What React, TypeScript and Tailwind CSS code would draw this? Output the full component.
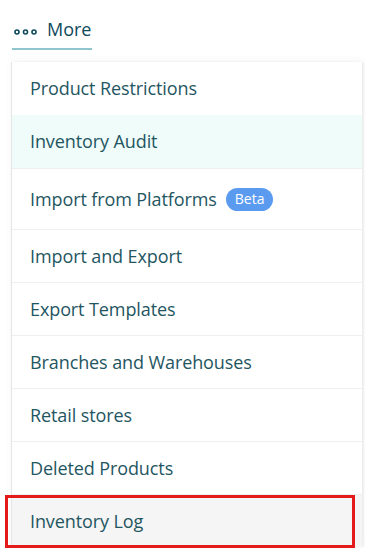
const items = [
  { label: 'Product Restrictions' },
  { label: 'Inventory Audit', active: true },
  { label: 'Import from Platforms', badge: 'Beta' },
  { label: 'Import and Export' },
  { label: 'Export Templates' },
  { label: 'Branches and Warehouses' },
  { label: 'Retail stores' },
  { label: 'Deleted Products' },
  { label: 'Inventory Log', hover: true },
]

function Dots() {
  return (
    <svg width="23" height="6" viewBox="0 0 23 6" fill="none" stroke="#0f4a5c" strokeWidth="1.6">
      <circle cx="3" cy="3" r="2" />
      <circle cx="11.5" cy="3" r="2" />
      <circle cx="20" cy="3" r="2" />
    </svg>
  )
}

export default function App() {
  return (
    <div className="relative w-[365px] h-[551px] overflow-hidden bg-white" style={{ fontFamily: '"Open Sans", "Liberation Sans", sans-serif' }}>
      {/* Tab */}
      <div className="flex pl-[12px] pt-[15px]">
        <div className="flex items-center gap-[10px] pl-[2px] pr-[1px] h-[35px] border-b-2 border-[#8fc6ce]">
          <Dots />
          <span className="text-[18px] text-[#0f4a5c] leading-none pb-[6px]">More</span>
        </div>
      </div>

      {/* Dropdown */}
      <div className="mt-[12px] ml-[11px] w-[351px] bg-white border-l border-[#e6e6e6] shadow-[0_-2px_8px_rgba(0,0,0,0.04),2px_0_2px_rgba(0,0,0,0.06)]">
        {items.map((item, i) => (
          <div
            key={item.label}
            className={`flex items-center gap-[9px] pl-[18px] ${item.badge ? 'h-[61px]' : 'h-[53px]'} ${i > 1 ? 'border-t border-[#efefef]' : ''} ${item.active ? 'bg-[#effcfa]' : ''} ${item.hover ? 'bg-[#f5f5f5]' : ''}`}
          >
            <span className="text-[18px] text-[#1f5661] tracking-[-0.1px]">{item.label}</span>
            {item.badge && (
              <span className="rounded-full bg-[#5a9bef] text-white text-[14px] leading-none px-[9px] py-[4px] pb-[5px]">
                {item.badge}
              </span>
            )}
          </div>
        ))}
      </div>

      {/* annotation */}
      <div className="absolute left-[5px] top-[495px] w-[350px] h-[53px] border-[3px] border-[#e31b1b]" />
    </div>
  )
}
